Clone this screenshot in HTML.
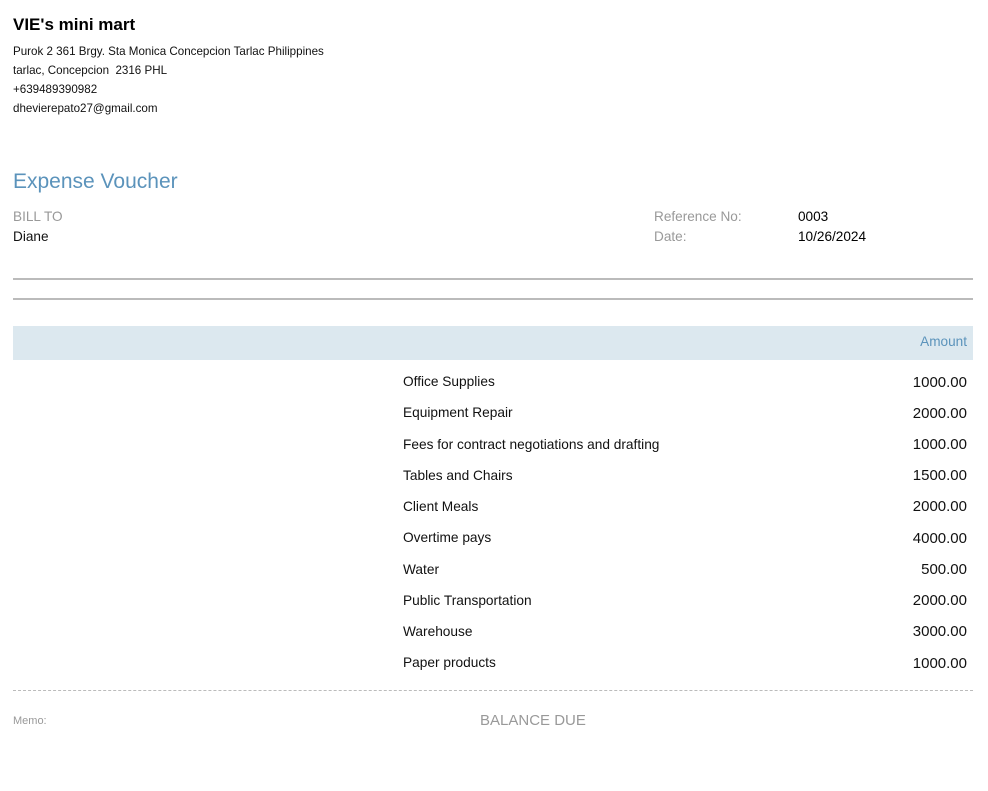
<!DOCTYPE html><html><head><style>
body{margin:0;width:988px;height:791px;background:#fff;font-family:"Liberation Sans",sans-serif;position:relative;overflow:hidden}
div{position:absolute;white-space:nowrap}
.a{font-size:11.6px;color:#111;left:13px}
.n{left:403px;font-size:13.7px;color:#111}
.v{right:21px;font-size:15px;color:#111}
.g{color:#999;font-size:13.6px}
</style></head><body>
<div style="left:13px;top:15px;font-size:17px;font-weight:bold">VIE's mini mart</div>
<div class="a" style="top:45px">Purok 2 361 Brgy. Sta Monica Concepcion Tarlac Philippines</div>
<div class="a" style="top:64px">tarlac, Concepcion&nbsp; 2316 PHL</div>
<div class="a" style="top:83px">+639489390982</div>
<div class="a" style="top:102px">dhevierepato27@gmail.com</div>
<div style="left:13px;top:170px;font-size:21px;color:#5b93bb">Expense Voucher</div>
<div class="g" style="left:13px;top:209px">BILL TO</div>
<div style="left:13px;top:229px;font-size:13.6px;color:#111">Diane</div>
<div class="g" style="left:654px;top:209px">Reference No:</div>
<div class="g" style="left:654px;top:229px">Date:</div>
<div style="left:798px;top:209px;font-size:13.6px">0003</div>
<div style="left:798px;top:229px;font-size:13.6px">10/26/2024</div>
<div style="left:13px;top:278px;width:960px;height:2px;background:#bbb"></div>
<div style="left:13px;top:298px;width:960px;height:2px;background:#bbb"></div>
<div style="left:13px;top:326px;width:960px;height:34px;background:#dce8ef"></div>
<div style="right:21px;top:334px;font-size:13.6px;color:#5b93bb">Amount</div>
<div class="n" style="top:374px">Office Supplies</div><div class="v" style="top:374px">1000.00</div>
<div class="n" style="top:405px">Equipment Repair</div><div class="v" style="top:405px">2000.00</div>
<div class="n" style="top:437px">Fees for contract negotiations and drafting</div><div class="v" style="top:436px">1000.00</div>
<div class="n" style="top:468px">Tables and Chairs</div><div class="v" style="top:467px">1500.00</div>
<div class="n" style="top:499px">Client Meals</div><div class="v" style="top:498px">2000.00</div>
<div class="n" style="top:530px">Overtime pays</div><div class="v" style="top:530px">4000.00</div>
<div class="n" style="top:562px">Water</div><div class="v" style="top:561px">500.00</div>
<div class="n" style="top:593px">Public Transportation</div><div class="v" style="top:592px">2000.00</div>
<div class="n" style="top:624px">Warehouse</div><div class="v" style="top:623px">3000.00</div>
<div class="n" style="top:655px">Paper products</div><div class="v" style="top:655px">1000.00</div>
<div style="left:13px;top:690px;width:960px;border-top:1px dashed #bbb"></div>
<div style="left:13px;top:715px;font-size:11px;color:#999">Memo:</div>
<div style="left:480px;top:712px;font-size:15px;color:#999">BALANCE DUE</div>
</body></html>
